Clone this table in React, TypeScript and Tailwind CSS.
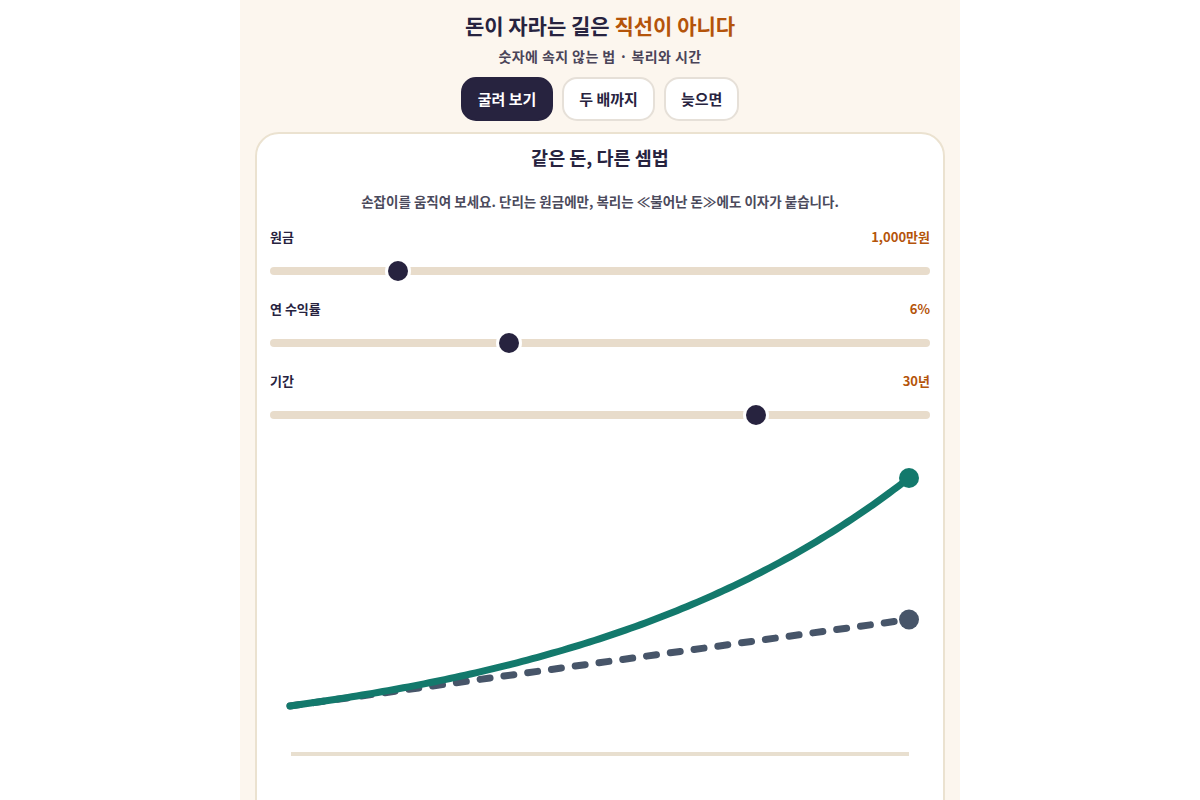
import React, { useState } from "react";

const FONT = { fontFamily: '"Noto Sans CJK KR", "Noto Sans", sans-serif' };

function Slider({
  label,
  value,
  display,
  min,
  max,
  step,
  onChange,
  first,
}: {
  label: string;
  value: number;
  display: string;
  min: number;
  max: number;
  step: number;
  onChange: (v: number) => void;
  first?: boolean;
}) {
  const pct = (value - min) / (max - min);
  return (
    <div className={first ? "mt-[17px]" : "mt-[18px]"}>
      <div className="flex items-center justify-between h-[18px] text-[13px] font-bold leading-[18px]">
        <span className="text-[#27233f]">{label}</span>
        <span className="text-[#b4540a]">{display}</span>
      </div>
      <div className="relative mt-[14px] h-[22px] flex items-center">
        <div className="w-full h-[8px] rounded-full bg-[#e8dccb]" />
        <div
          className="absolute top-[1px] w-[20px] h-[20px] rounded-full bg-[#27233f] shadow-[0_0_0_3px_#ffffff] pointer-events-none"
          style={{ left: `calc(${pct} * (100% - 20px))` }}
        />
        <input
          type="range"
          min={min}
          max={max}
          step={step}
          value={value}
          onChange={(e) => onChange(Number(e.target.value))}
          className="absolute inset-0 w-full h-full opacity-0 cursor-pointer"
        />
      </div>
    </div>
  );
}

export default function App() {
  const [tab, setTab] = useState(0);
  const [principal, setPrincipal] = useState(1000);
  const [rate, setRate] = useState(6);
  const [years, setYears] = useState(30);

  const r = rate / 100;
  const finalC = principal * Math.pow(1 + r, years);
  const finalS = principal * (1 + r * years);
  const maxV = Math.max(finalC, finalS);
  const x0 = 20;
  const x1 = 639;
  const yBase = 316;
  const yTop = 40;
  const sx = (t: number) => x0 + (t / years) * (x1 - x0);
  const sy = (v: number) => yBase - (v / maxV) * (yBase - yTop);

  const steps = 120;
  const cPts: string[] = [];
  for (let i = 0; i <= steps; i++) {
    const t = (i / steps) * years;
    cPts.push(`${sx(t).toFixed(2)},${sy(principal * Math.pow(1 + r, t)).toFixed(2)}`);
  }

  const tabs = ["굴려 보기", "두 배까지", "늦으면"];

  return (
    <div className="min-h-screen bg-white flex justify-center" style={FONT}>
      <div className="w-[720px] min-h-screen bg-[#fcf6ee] px-[15px] pt-[11px] flex flex-col items-center">
        <h1 className="text-[21px] leading-[28px] font-bold text-[#27233f]">
          돈이 자라는 길은 <span className="text-[#b4540a]">직선이 아니다</span>
        </h1>
        <p className="mt-[7px] text-[14px] leading-[20px] font-bold tracking-[0.03em] text-[#4a4458]">
          숫자에 속지 않는 법 · 복리와 시간
        </p>
        <div className="mt-[11px] flex gap-[9px]">
          {tabs.map((t, i) => (
            <button
              key={t}
              onClick={() => setTab(i)}
              className={
                "px-[15px] py-[10px] rounded-[15px] border-2 text-[15px] leading-[20px] font-bold " +
                (tab === i
                  ? "bg-[#27233f] border-[#27233f] text-white"
                  : "bg-white border-[#e6e0d8] text-[#27233f]")
              }
            >
              {t}
            </button>
          ))}
        </div>

        <div className="mt-[11px] w-full rounded-[24px] border-2 border-[#ebe2d0] bg-white px-[13px] pt-[11px] pb-4">
          <h2 className="text-center text-[18.5px] leading-[24px] font-bold text-[#27233f]">
            같은 돈, 다른 셈법
          </h2>
          <p className="mt-[22px] text-center text-[13.5px] leading-[20px] font-bold text-[#4b4a5c]">
            손잡이를 움직여 보세요. 단리는 원금에만, 복리는 ≪불어난 돈≫에도 이자가 붙습니다.
          </p>

          <Slider
            first
            label="원금"
            value={principal}
            display={`${principal.toLocaleString("en-US")}만원`}
            min={100}
            max={5000}
            step={100}
            onChange={setPrincipal}
          />
          <Slider
            label="연 수익률"
            value={rate}
            display={`${rate}%`}
            min={1}
            max={15}
            step={1}
            onChange={setRate}
          />
          <Slider
            label="기간"
            value={years}
            display={`${years}년`}
            min={1}
            max={40}
            step={1}
            onChange={setYears}
          />

          <svg className="mt-[12px] block" width="660" height="400" viewBox="0 0 660 400">
            <line x1={21} y1={yBase} x2={639} y2={yBase} stroke="#e8dfcf" strokeWidth={4} />
            <line
              x1={sx(0)}
              y1={sy(principal)}
              x2={sx(years)}
              y2={sy(finalS)}
              stroke="#475569"
              strokeWidth={7}
              strokeLinecap="round"
              strokeDasharray="10 14"
            />
            <polyline
              points={cPts.join(" ")}
              fill="none"
              stroke="#13796c"
              strokeWidth={7}
              strokeLinecap="round"
              strokeLinejoin="round"
            />
            <circle cx={sx(years)} cy={sy(finalS)} r={10} fill="#475569" />
            <circle cx={sx(years)} cy={sy(finalC)} r={10} fill="#13796c" />
          </svg>
        </div>
      </div>
    </div>
  );
}
